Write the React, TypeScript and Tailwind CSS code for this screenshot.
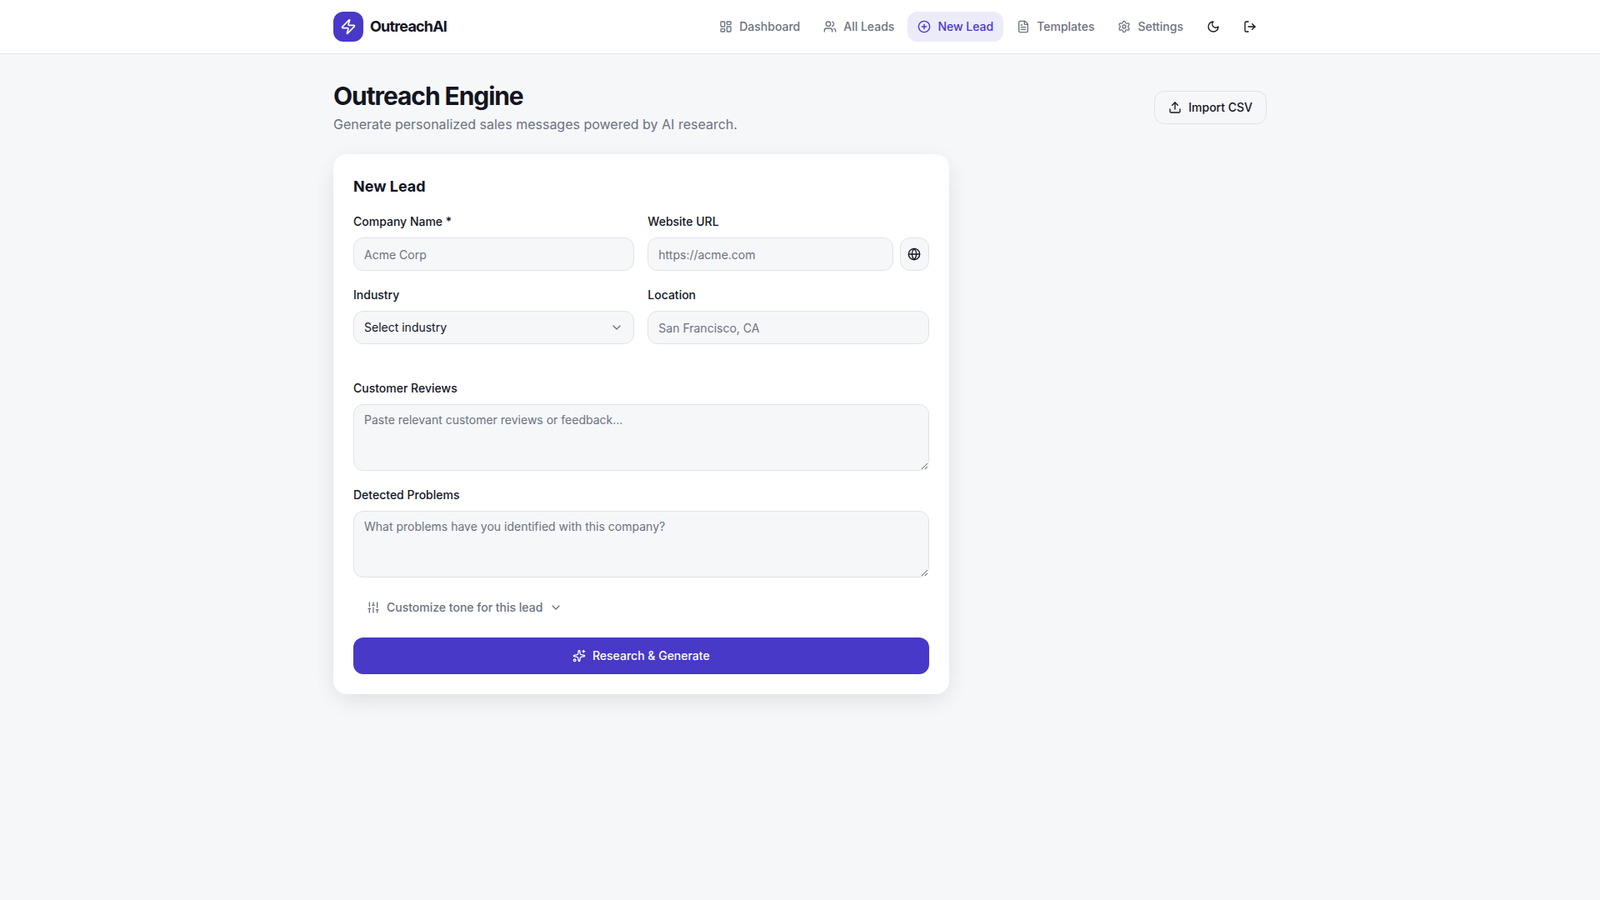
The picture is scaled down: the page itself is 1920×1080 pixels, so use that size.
import {
  ChevronDown,
  CirclePlus,
  FileText,
  Globe,
  LayoutDashboard,
  LogOut,
  Settings,
  SlidersVertical,
  Sparkles,
  Upload,
  Users,
  Zap,
} from "lucide-react";

const NAV_ITEMS = [
  { label: "Dashboard", icon: LayoutDashboard },
  { label: "All Leads", icon: Users },
  { label: "New Lead", icon: CirclePlus, active: true },
  { label: "Templates", icon: FileText },
  { label: "Settings", icon: Settings },
];

const fieldClass =
  "h-10 w-full rounded-xl border border-[#dfe2e8] bg-[#f6f7f9] px-3 text-sm text-[#12151f] outline-none placeholder:text-[#6b7280]";
const areaClass =
  "block h-20 w-full resize-y rounded-xl border border-[#dfe2e8] bg-[#f6f7f9] px-3 py-2 text-sm text-[#12151f] outline-none placeholder:text-[#6b7280]";
const labelClass = "mb-2.5 block text-sm leading-[18px] font-medium text-[#12151f]";

function MoonIcon() {
  return (
    <svg className="h-4 w-4" viewBox="0 0 24 24" fill="none" stroke="currentColor" strokeWidth="2" strokeLinecap="round" strokeLinejoin="round">
      <path d="M12 3a6 6 0 0 0 9 9 9 9 0 1 1-9-9Z" />
    </svg>
  );
}

function Header() {
  return (
    <header className="h-[65px] border-b border-[#e1e4ea] bg-white">
      <div className="mx-auto flex h-16 max-w-[1152px] items-center justify-between px-4">
        <div className="flex items-center gap-2">
          <div className="flex h-9 w-9 items-center justify-center rounded-xl bg-[#4839c9]">
            <Zap className="h-5 w-5 text-white" />
          </div>
          <span className="text-lg font-bold tracking-[-0.045em] text-[#12151f]">OutreachAI</span>
        </div>
        <nav className="flex items-center gap-1">
          {NAV_ITEMS.map(({ label, icon: Icon, active }) => (
            <a
              key={label}
              className={
                active
                  ? "flex h-9 items-center gap-2 rounded-xl bg-[#ecebf9] px-3 text-sm font-medium text-[#4839c9]"
                  : "flex h-9 items-center gap-2 rounded-xl px-3 text-sm font-medium text-[#6b7280]"
              }
            >
              <Icon className="h-4 w-4" />
              {label}
            </a>
          ))}
          <button className="flex h-10 w-10 items-center justify-center rounded-xl text-[#12151f]">
            <MoonIcon />
          </button>
          <button className="flex h-10 w-10 items-center justify-center rounded-xl text-[#12151f]">
            <LogOut className="h-4 w-4" />
          </button>
        </nav>
      </div>
    </header>
  );
}

function LeadForm() {
  return (
    <div className="col-span-2 rounded-2xl bg-white p-6 shadow-[0_8px_30px_-6px_rgba(18,21,31,0.14)]">
      <h2 className="mb-[18px] text-lg leading-[30px] font-bold text-[#12151f]">New Lead</h2>
      <div className="grid grid-cols-2 gap-x-4 gap-y-5">
        <div>
          <label className={labelClass}>Company Name *</label>
          <input className={fieldClass} placeholder="Acme Corp" />
        </div>
        <div>
          <label className={labelClass}>Website URL</label>
          <div className="flex gap-2">
            <input className={fieldClass} placeholder="https://acme.com" />
            <button className="flex h-10 w-[35px] shrink-0 items-center justify-center rounded-xl border border-[#dfe2e8] bg-[#f6f7f9] text-[#12151f]">
              <Globe className="h-4 w-4" />
            </button>
          </div>
        </div>
        <div>
          <label className={labelClass}>Industry</label>
          <button className="flex h-10 w-full items-center justify-between rounded-xl border border-[#dfe2e8] bg-[#f6f7f9] px-3 text-sm text-[#12151f]">
            Select industry
            <ChevronDown className="h-4 w-4 text-[#6b7280]" />
          </button>
        </div>
        <div>
          <label className={labelClass}>Location</label>
          <input className={fieldClass} placeholder="San Francisco, CA" />
        </div>
      </div>
      <div className="mt-11 flex flex-col gap-5">
        <div>
          <label className={labelClass}>Customer Reviews</label>
          <textarea className={areaClass} placeholder="Paste relevant customer reviews or feedback..." />
        </div>
        <div>
          <label className={labelClass}>Detected Problems</label>
          <textarea className={areaClass} placeholder="What problems have you identified with this company?" />
        </div>
        <button className="flex h-8 items-center gap-2 self-start px-4 text-sm font-medium text-[#6b7280]">
          <SlidersVertical className="h-4 w-4" />
          Customize tone for this lead
          <ChevronDown className="h-4 w-4" />
        </button>
        <button className="flex h-11 items-center justify-center gap-2 rounded-xl bg-[#4839c9] text-sm font-medium text-white">
          <Sparkles className="h-4 w-4" />
          Research &amp; Generate
        </button>
      </div>
    </div>
  );
}

export default function App() {
  return (
    <div className="min-h-screen bg-[#f6f7f9] font-['Inter',sans-serif]">
      <Header />
      <main className="mx-auto max-w-[1152px] px-4 py-8">
        <div className="mb-6 flex items-center justify-between">
          <div>
            <h1 className="text-3xl font-bold tracking-[-0.036em] text-[#12151f]">Outreach Engine</h1>
            <p className="mt-1 text-base text-[#6b7280]">Generate personalized sales messages powered by AI research.</p>
          </div>
          <button className="flex h-10 items-center gap-2 rounded-xl border border-[#dfe2e8] bg-[#f6f7f9] px-4 text-sm font-medium text-[#12151f]">
            <Upload className="h-4 w-4" />
            Import CSV
          </button>
        </div>
        <div className="grid grid-cols-3 gap-6">
          <LeadForm />
        </div>
      </main>
    </div>
  );
}
